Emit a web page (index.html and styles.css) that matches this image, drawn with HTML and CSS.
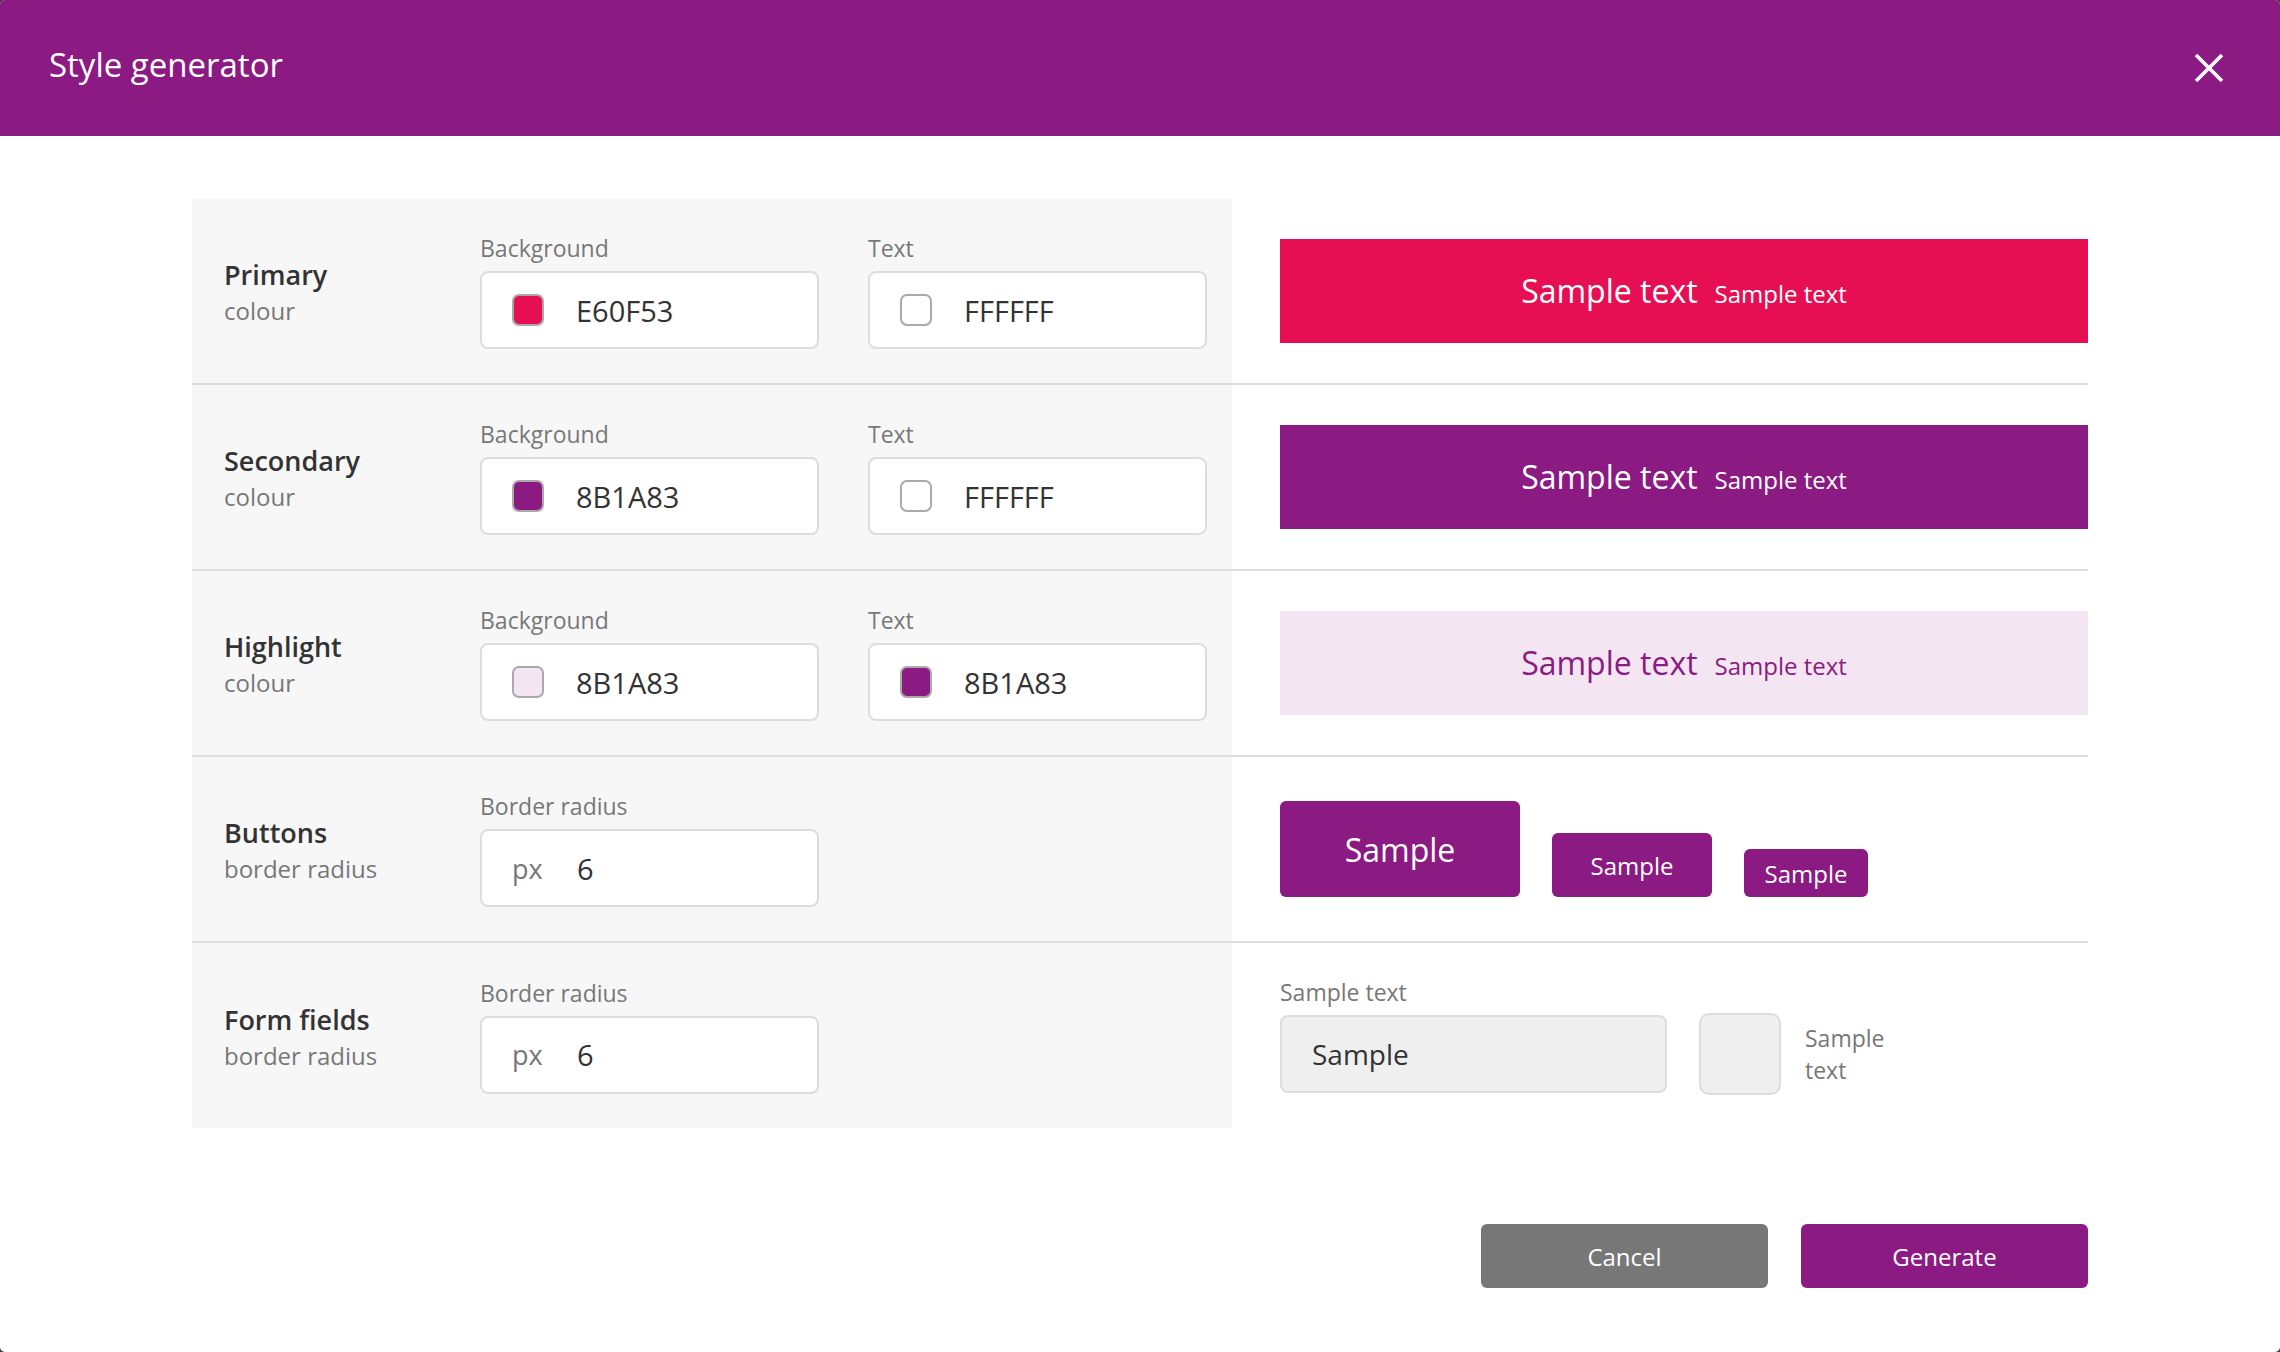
FILE: index.html
```html
<!DOCTYPE html>
<html lang="en">
<head>
<meta charset="utf-8">
<title>Style generator</title>
<link rel="stylesheet" href="styles.css">
</head>
<body>
<div class="dialog">
  <header class="dlg-head">
    <h1 class="dlg-title">Style generator</h1>
    <button class="close" aria-label="Close">
      <svg width="30" height="30" viewBox="0 0 30 30"><path d="M2 2 L28 28 M28 2 L2 28" stroke="#fff" stroke-width="3.6" fill="none"/></svg>
    </button>
  </header>
  <main class="dlg-body">
    <div class="rows">
      <section class="row">
        <div class="settings">
          <div class="row-label"><div class="row-title">Primary</div><div class="row-sub">colour</div></div>
          <div class="field"><div class="field-label">Background</div><div class="input"><span class="swatch sw-red"></span><span class="val">E60F53</span></div></div>
          <div class="field"><div class="field-label">Text</div><div class="input"><span class="swatch sw-white"></span><span class="val">FFFFFF</span></div></div>
        </div>
        <div class="preview"><div class="bar bar-primary"><span class="big">Sample text</span><span class="small">Sample text</span></div></div>
      </section>
      <section class="row">
        <div class="settings">
          <div class="row-label"><div class="row-title">Secondary</div><div class="row-sub">colour</div></div>
          <div class="field"><div class="field-label">Background</div><div class="input"><span class="swatch sw-purple"></span><span class="val">8B1A83</span></div></div>
          <div class="field"><div class="field-label">Text</div><div class="input"><span class="swatch sw-white"></span><span class="val">FFFFFF</span></div></div>
        </div>
        <div class="preview"><div class="bar bar-secondary"><span class="big">Sample text</span><span class="small">Sample text</span></div></div>
      </section>
      <section class="row">
        <div class="settings">
          <div class="row-label"><div class="row-title">Highlight</div><div class="row-sub">colour</div></div>
          <div class="field"><div class="field-label">Background</div><div class="input"><span class="swatch sw-pink"></span><span class="val">8B1A83</span></div></div>
          <div class="field"><div class="field-label">Text</div><div class="input"><span class="swatch sw-purple"></span><span class="val">8B1A83</span></div></div>
        </div>
        <div class="preview"><div class="bar bar-highlight"><span class="big">Sample text</span><span class="small">Sample text</span></div></div>
      </section>
      <section class="row">
        <div class="settings">
          <div class="row-label"><div class="row-title">Buttons</div><div class="row-sub">border radius</div></div>
          <div class="field"><div class="field-label">Border radius</div><div class="input"><span class="unit">px</span><span class="val">6</span></div></div>
        </div>
        <div class="preview">
          <div class="btn-samples">
            <span class="sbtn sbtn-lg">Sample</span>
            <span class="sbtn sbtn-md">Sample</span>
            <span class="sbtn sbtn-sm">Sample</span>
          </div>
        </div>
      </section>
      <section class="row">
        <div class="settings">
          <div class="row-label"><div class="row-title">Form fields</div><div class="row-sub">border radius</div></div>
          <div class="field"><div class="field-label">Border radius</div><div class="input"><span class="unit">px</span><span class="val">6</span></div></div>
        </div>
        <div class="preview">
          <div class="form-sample">
            <div class="fs-field">
              <div class="fs-label">Sample text</div>
              <div class="fs-input">Sample</div>
            </div>
            <div class="fs-check">
              <span class="fs-box"></span>
              <span class="fs-check-label">Sample<br>text</span>
            </div>
          </div>
        </div>
      </section>
    </div>
    <footer class="actions">
      <button class="btn btn-cancel">Cancel</button>
      <button class="btn btn-generate">Generate</button>
    </footer>
  </main>
</div>
</body>
</html>
```
FILE: styles.css
```css
* { box-sizing: border-box; }
html, body { margin: 0; padding: 0; }
body {
  background: #3a3a3a;
  font-family: "Open Sans", "Noto Sans", sans-serif;
  color: #333;
}
.dialog {
  width: 2280px;
  height: 1352px;
  background: #fff;
  border-radius: 5px;
  overflow: hidden;
}
.dlg-head {
  height: 136px;
  background: #8b1a83;
  display: flex;
  justify-content: space-between;
  align-items: flex-start;
  padding: 0 56px 0 49px;
}
.dlg-title {
  margin: 0;
  font-size: 33px;
  font-weight: 400;
  line-height: 130px;
  color: #fff;
}
.close {
  align-self: center;
  background: none;
  border: 0;
  padding: 0;
  width: 30px;
  height: 30px;
  display: flex;
}
.dlg-body {
  padding: 63px 192px 0;
}
.rows { display: flex; flex-direction: column; }
.row {
  display: flex;
  height: 186px;
  border-bottom: 2px solid #dddddd;
}
.row:last-child { border-bottom: 0; height: 185px; }
.settings {
  width: 1040px;
  flex: none;
  background: #f7f7f7;
  display: grid;
  grid-template-columns: 207px 339px 339px;
  column-gap: 49px;
  align-items: center;
  padding-left: 32px;
}
.row-label { padding-top: 4px; }
.row-title {
  font-size: 27px;
  font-weight: 600;
  line-height: 32px;
  color: #333;
}
.row-sub {
  font-size: 24px;
  line-height: 32px;
  margin-top: 4px;
  color: #777;
}
.field { display: flex; flex-direction: column; }
.field-label {
  font-size: 23px;
  line-height: 30px;
  color: #777;
  margin-bottom: 8px;
}
.input {
  height: 78px;
  background: #fff;
  border: 2px solid #dddddd;
  border-radius: 8px;
  display: flex;
  align-items: center;
  padding-left: 30px;
  gap: 32px;
}
.swatch {
  width: 32px;
  height: 32px;
  border-radius: 7px;
  border: 2px solid #a9a9a9;
  flex: none;
}
.sw-red { background: #e60f53; }
.sw-white { background: #fff; }
.sw-purple { background: #8b1a83; }
.sw-pink { background: #f3e6f2; }
.val { font-size: 29px; color: #333; }
.unit { font-size: 27px; color: #777; width: 33px; }
.preview {
  flex: 1;
  padding-left: 48px;
  display: flex;
  align-items: center;
}
.bar {
  width: 100%;
  height: 104px;
  display: flex;
  justify-content: center;
  align-items: baseline;
  line-height: 104px;
}
.bar .big { font-size: 32px; }
.bar .small { font-size: 24px; margin-left: 17px; }
.bar-primary { background: #e60f53; color: #fff; }
.bar-secondary { background: #8b1a83; color: #fff; }
.bar-highlight { background: #f3e6f2; color: #8b1a83; }
.btn-samples {
  display: flex;
  align-items: flex-end;
  gap: 32px;
}
.sbtn {
  background: #8b1a83;
  color: #fff;
  border-radius: 6px;
  display: flex;
  align-items: center;
  justify-content: center;
}
.sbtn-lg { width: 240px; height: 96px; font-size: 32px; }
.sbtn-md { width: 160px; height: 64px; font-size: 24px; }
.sbtn-sm { width: 124px; height: 48px; font-size: 24px; }
.form-sample {
  display: flex;
  align-items: flex-end;
  gap: 32px;
  margin-top: -2px;
}
.fs-field { display: flex; flex-direction: column; }
.fs-label {
  font-size: 23px;
  line-height: 30px;
  color: #777;
  margin-bottom: 8px;
}
.fs-input {
  width: 387px;
  height: 78px;
  background: #efefef;
  border: 2px solid #dddddd;
  border-radius: 8px;
  display: flex;
  align-items: center;
  padding-left: 30px;
  font-size: 28px;
  color: #333;
}
.fs-check {
  display: flex;
  align-items: center;
  gap: 24px;
  margin-bottom: -2px;
}
.fs-box {
  width: 82px;
  height: 82px;
  background: #efefef;
  border: 2px solid #dddddd;
  border-radius: 10px;
}
.fs-check-label {
  font-size: 23px;
  line-height: 32px;
  color: #777;
}
.actions {
  display: flex;
  justify-content: flex-end;
  gap: 33px;
  margin-top: 96px;
}
.btn {
  width: 287px;
  height: 64px;
  border: 0;
  border-radius: 6px;
  color: #fff;
  font-family: inherit;
  font-size: 24px;
  padding: 0;
}
.btn-cancel { background: #777777; }
.btn-generate { background: #8b1a83; }
```
